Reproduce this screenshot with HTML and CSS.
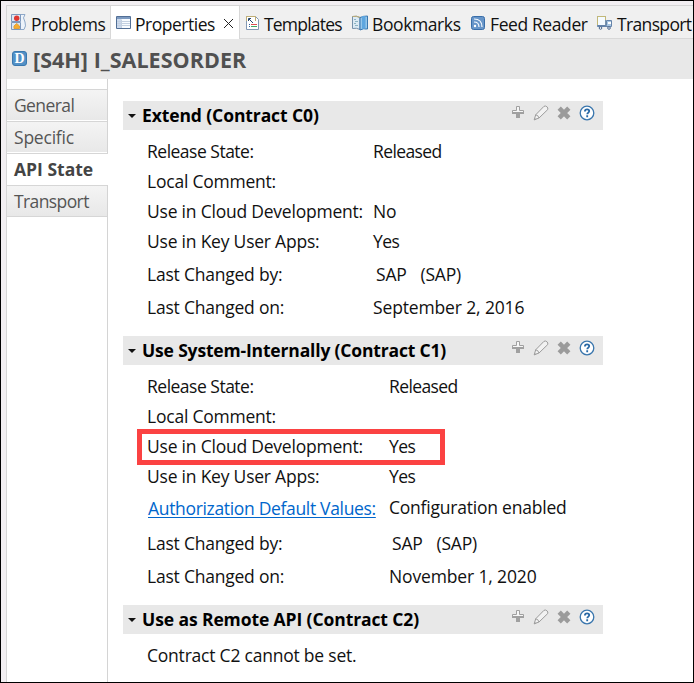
FILE: index.html
```html
<!DOCTYPE html>
<html lang="en">
<head>
<meta charset="utf-8">
<title>Properties</title>
<link rel="stylesheet" href="styles.css">
</head>
<body>
<svg class="defs" width="0" height="0" aria-hidden="true">
  <symbol id="add" viewBox="0 0 14 14"><path d="M5.5 1.500h3v4h4v2h-11v-2h4z" fill="#f6f6f6" stroke="#a0a0a0"/><path d="M1 7h12v2H9v4H5V9H1z" fill="#a0a0a0"/></symbol>
  <symbol id="edit" viewBox="0 0 16 16"><path d="M1.2 14.8l1.5-5L11 1.300q1.500-.8 2.900.4t.8 2.900L6 13zM2.700 9.800q2.500.2 3.300 3.200M1.200 14.800l2-1" fill="#f2f2f2" stroke="#9c9c9c"/></symbol>
  <symbol id="remove" viewBox="0 0 14 14"><path d="M2.200 2.200l9.600 9.600M11.800 2.200l-9.600 9.600" stroke="#9b9b9b" stroke-width="4.600"/></symbol>
  <symbol id="help" viewBox="0 0 16 16"><circle cx="8" cy="8" r="6.800" fill="#fff" stroke="#3a76ad" stroke-width="1.300"/><path d="M5.900 6.400q0-2.100 2.200-2.100 2.100 0 2.100 1.800 0 1-1 1.700-.9.600-.9 1.500M8.200 10.300v1.900" fill="none" stroke="#2868a5" stroke-width="1.800"/></symbol>
</svg>
<div class="window">
  <div class="view">
    <nav class="tabs">
      <div class="tab problems">
        <svg width="16" height="16" viewBox="0 0 16 16"><path d="M9 .5h5q-3 3 0 7.500 1.500 4-1 7.500H9" fill="#edf3fa" stroke="#8ea8c8"/><path d="M.5.5h9v7h-9zM.5 8.500h9v7h-9z" fill="#dce8f4" stroke="#7d99bd"/><circle cx="5.700" cy="4.200" r="2.700" fill="#df3832"/><path d="M3 14.500v-2.500l2.700-2.500L8.500 12v2.500z" fill="#f6ad2f" stroke="#e2a13b"/></svg>
        <span>Problems</span>
      </div>
      <div class="tab properties">
        <svg width="15" height="14" viewBox="0 0 15 14"><path d="M.5.5h14v12H.5z" fill="#f7fbff" stroke="#526f96"/><path d="M1 1h13v2H1z" fill="#7d9ac0"/><path d="M1 3h4v9H1z" fill="#cbd9ed"/><path d="M1 5.500h13M1 7.500h13M1 9.500h13M5.500 3.500V12" stroke="#c3d0e1"/></svg>
        <span>Properties</span>
        <svg class="close" width="11" height="11" viewBox="0 0 11 11"><path d="M1 1l9 9M10 1l-9 9" stroke="#222"/></svg>
      </div>
      <div class="tab templates">
        <svg width="13" height="14" viewBox="0 0 13 14"><path d="M.5.5h9l3 3v10H.5z" fill="#fff" stroke="#8298b4"/><path d="M.5 5V.5h9V5" fill="none" stroke="#c0ae75"/><path d="M2.500 5V2.500H5M3 3l4 4" fill="none" stroke="#29486f"/><path d="M3 8.500h1M3 10.500h1" stroke="#3262a0"/><path d="M5 8.500h6" stroke="#df4e50"/><path d="M5 10.500h6" stroke="#45a863"/></svg>
        <span>Templates</span>
      </div>
      <div class="tab bookmarks">
        <svg width="16" height="16" viewBox="0 0 16 16"><path d="M.5 1.500q4-1 7.500 1v12q-3.500-2-7.500-1z" fill="#dceaf4" stroke="#7590aa"/><path d="M.5 1.500q4-1 7.500 1" fill="none" stroke="#c0ad70"/><path d="M15.500 1v13q-4-1-7.500 1V2.500q3-1.500 7.500-1.500z" fill="#96c7ea" stroke="#3875ad"/><path d="M10 1h3.500v14L12 13l-2 2z" fill="#5ea6df"/><path d="M2 4.500h2m-1 2h3m-4 2h2m-1 2h3" stroke="#8cb4c3"/></svg>
        <span>Bookmarks</span>
      </div>
      <div class="tab feed">
        <svg width="14" height="14" viewBox="0 0 14 14"><rect x=".5" y=".5" width="13" height="13" rx="2" fill="#6795c8" stroke="#386da9"/><circle cx="4" cy="10" r="1.200" fill="#fff"/><path d="M3 6q5 0 5 5M3 3q8 0 8 8" fill="none" stroke="#f5faff" stroke-width="1.200"/></svg>
        <span>Feed Reader</span>
      </div>
      <div class="tab transport">
        <svg width="16" height="14" viewBox="0 0 16 14"><path d="M.5.5h8v9h-8z" fill="#f4faff" stroke="#7993ab"/><path d="M.5 9V.5h8V4" fill="none" stroke="#c3b876"/><path d="M9.500 4.500h5v6H.500v-1h9z" fill="#a8c6e2" stroke="#6684aa"/><path d="M11 6h3v2h-3z" fill="#fff"/><circle cx="3.500" cy="12" r="1.300" fill="#fff" stroke="#49678e"/><circle cx="12" cy="12" r="1.300" fill="#fff" stroke="#49678e"/></svg>
        <span>Transport</span>
      </div>
    </nav>
    <header class="title">
      <span class="badge">D</span>
      <h1>[S4H] I_SALESORDER</h1>
    </header>
    <div class="body">
      <aside class="side">
        <div class="item"><span class="tight">General</span></div>
        <div class="item"><span>Specific</span></div>
        <div class="item active"><span>API State</span></div>
        <div class="item last"><span class="tight">Transport</span></div>
      </aside>
      <main class="content">
        <section>
          <div class="bar"><i class="arrow"></i><h2>Extend (Contract C0)</h2><div class="tools"><svg class="add"><use href="#add"/></svg><svg class="edit"><use href="#edit"/></svg><svg class="remove"><use href="#remove"/></svg><svg class="help"><use href="#help"/></svg></div></div>
          <div class="rows">
            <div class="row"><span class="snug">Release State:</span><b class="tight">Released</b></div>
            <div class="row"><span>Local Comment:</span></div>
            <div class="row"><span>Use in Cloud Development:</span><b>No</b></div>
            <div class="row"><span>Use in Key User Apps:</span><b class="tight">Yes</b></div>
            <div class="row by"><span>Last Changed by:</span><b>SAP</b><b class="user">(SAP)</b></div>
            <div class="row"><span>Last Changed on:</span><b class="loose">September 2, 2016</b></div>
          </div>
        </section>
        <section class="wide">
          <div class="bar"><i class="arrow"></i><h2 class="long">Use System-Internally (Contract C1)</h2><div class="tools"><svg class="add"><use href="#add"/></svg><svg class="edit"><use href="#edit"/></svg><svg class="remove"><use href="#remove"/></svg><svg class="help"><use href="#help"/></svg></div></div>
          <div class="rows">
            <div class="row"><span class="snug">Release State:</span><b class="tight">Released</b></div>
            <div class="row"><span>Local Comment:</span></div>
            <div class="row marked"><span>Use in Cloud Development:</span><b class="tight">Yes</b></div>
            <div class="row"><span>Use in Key User Apps:</span><b class="tight">Yes</b></div>
            <div class="row auth"><span><a href="#">Authorization Default Values:</a></span><b>Configuration enabled</b></div>
            <div class="row by"><span>Last Changed by:</span><b>SAP</b><b class="user">(SAP)</b></div>
            <div class="row"><span>Last Changed on:</span><b class="loose">November 1, 2020</b></div>
          </div>
        </section>
        <section>
          <div class="bar"><i class="arrow"></i><h2>Use as Remote API (Contract C2)</h2><div class="tools"><svg class="add"><use href="#add"/></svg><svg class="edit"><use href="#edit"/></svg><svg class="remove"><use href="#remove"/></svg><svg class="help"><use href="#help"/></svg></div></div>
          <div class="rows"><div class="row"><span>Contract C2 cannot be set.</span></div></div>
        </section>
      </main>
    </div>
  </div>
</div>
</body>
</html>
```
FILE: styles.css
```css
*, *::after { box-sizing: border-box; }
body { margin: 0; font: 17.500px/24px "Open Sans", "Noto Sans", sans-serif; color: #111; letter-spacing: -.22px; white-space: nowrap; overflow: hidden; }
svg { display: block; flex: none; }
.defs { position: absolute; }
.window { width: 694px; height: 683px; border: 1px solid #000; background: #f2eff2; padding: 4px 0 0 5px; overflow: hidden; }
.view { height: 677px; border: 1px solid #d6d6d6; border-width: 1px 0 0 1px; background: #fff; }
.tabs { display: flex; height: 33px; background: #f0f0f0; border-bottom: 1px solid #d8d8d8; letter-spacing: -.4px; }
.tab { display: flex; align-items: flex-start; flex: none; padding-top: 6px; }
.tab > svg { margin-top: 4px; }
.tab > span { margin-left: 4px; }
.problems { width: 103px; padding-left: 4px; }
.problems > svg { margin-top: 2px; }
.properties { width: 130px; height: 33px; background: #fff; border: 1px solid #d8d8d8; border-width: 0 1px; padding-left: 5px; letter-spacing: -.48px; }
.properties > .close { margin: 6px 0 0 8px; }
.templates { width: 106px; padding-left: 6px; letter-spacing: -.8px; }
.templates > span { margin-left: 5px; }
.bookmarks { width: 119px; padding-left: 6px; }
.bookmarks > svg { margin-top: 3px; }
.feed { width: 126px; padding-left: 6px; }
.feed > span { margin-left: 5px; }
.transport { padding-left: 6px; letter-spacing: -.65px; }
.title { display: flex; height: 40px; padding: 12px 0 0 5px; background: #e8e8e8; }
.badge { width: 15px; height: 15px; border: 1px solid #3a78ae; border-radius: 3px; background: #5391c6; color: #fff; font: bold 14px/14px "Liberation Serif", serif; text-align: center; letter-spacing: 0; }
h1 { margin: -5px 0 0 6px; font-size: 21.500px; line-height: 28px; color: #505050; letter-spacing: .04px; }
.body { display: flex; height: 603px; }
.side { width: 101px; padding-top: 10px; border-right: 1px solid #d4d4d4; color: #555; }
.item { height: 32px; padding: 3px 0 0 7px; border-top: 1px solid #d6d6d6; border-bottom: 1px solid #fff; background: linear-gradient(#f4f4f4, #e8e8e8); }
.item.active { width: 101px; background: #fff; font-weight: bold; color: #444; letter-spacing: 0; }
.item.last { border-bottom: 1px solid #d6d6d6; }
.content { flex: 1; padding: 22px 0 0 15px; }
section { margin-bottom: 13px; }
.bar { display: flex; align-items: center; width: 480px; height: 29px; padding-left: 5px; background: #e8e8e8; color: #000; }
.arrow { border: 4px solid transparent; border-top-color: #111; border-bottom: 0; }
h2 { margin: -2px 0 0 6px; font-size: 17.500px; line-height: 24px; letter-spacing: -.1px; }
h2.long { letter-spacing: -.17px; }
.tools { display: flex; align-items: flex-start; height: 18px; margin: -5px 8px 0 auto; }
.add { width: 14px; height: 14px; margin: 1px 8px 0 0; }
.edit { width: 16px; height: 16px; margin: 1px 8px 0 0; }
.remove { width: 14px; height: 14px; margin: 2px 8px 0 0; }
.help { width: 16px; height: 16px; margin-top: 1px; }
.rows { padding: 7px 0 0 24px; }
.row { display: flex; align-items: center; height: 30px; padding-bottom: 2px; }
.row > span { width: 226px; }
.row > b { font-weight: normal; }
.wide .row > span { width: 242px; }
.row.by { height: 36px; }
.by > b { margin-left: 3px; }
.by > .user { margin-left: 14px; }
.row.auth { height: 34px; }
.auth > b { margin-top: -3px; }
.tight { letter-spacing: -.6px; }
.snug { letter-spacing: -.5px; }
.loose { letter-spacing: -.14px; }
a { color: #0066cc; margin-left: 1px; letter-spacing: -.33px; text-underline-offset: 2px; text-decoration-thickness: 1px; }
.marked { position: relative; }
.marked::after { content: ""; position: absolute; left: -10px; top: -3px; width: 308px; height: 36px; border: 5px solid #fb4242; }
```
